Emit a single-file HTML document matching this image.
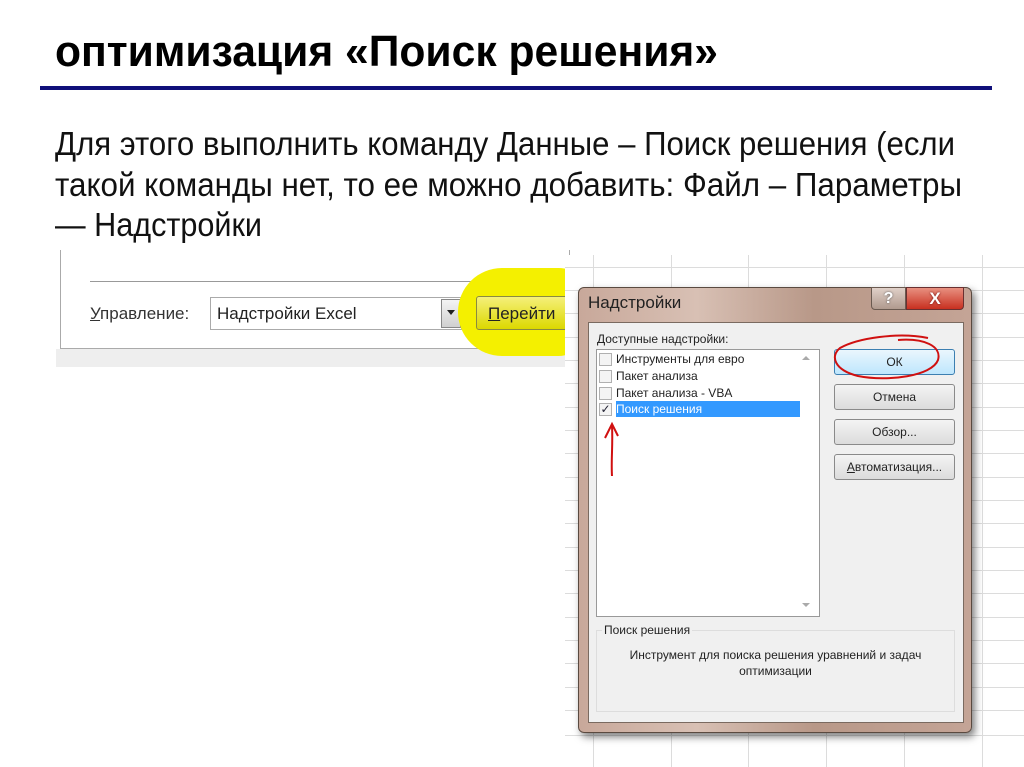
<!DOCTYPE html>
<html><head><meta charset="utf-8"><style>
*{margin:0;padding:0;box-sizing:border-box}
body{width:1024px;height:767px;background:#fff;position:relative;overflow:hidden;font-family:"Liberation Sans","DejaVu Sans",sans-serif}
.a{position:absolute}
.btn{position:absolute;left:834px;width:121px;height:26px;border:1px solid #8a8a8a;border-radius:3px;background:linear-gradient(#f4f4f4,#dcdcdc);font-size:12px;text-align:center;line-height:24px;color:#222}
.it{position:absolute;left:600px;font-size:12px;color:#222;height:16px;line-height:16px}
.cb{display:inline-block;width:13px;height:13px;border:1px solid #b0b0b0;background:#f4f4f4;vertical-align:middle;margin-right:4px}
</style></head><body>
<svg class="a" style="left:0;top:0" width="1024" height="250">
<text x="55" y="66" font-family="Liberation Sans" font-weight="bold" font-size="44" textLength="663" lengthAdjust="spacingAndGlyphs">оптимизация «Поиск решения»</text>
<rect x="40" y="86" width="952" height="4" fill="#10107a"/>
<text x="55" y="155" font-family="Liberation Sans" font-size="33" fill="#111" textLength="900" lengthAdjust="spacingAndGlyphs">Для этого выполнить команду Данные – Поиск решения (если</text>
<text x="55" y="196" font-family="Liberation Sans" font-size="33" fill="#111" textLength="907" lengthAdjust="spacingAndGlyphs">такой команды нет, то ее можно добавить: Файл – Параметры</text>
<text x="55" y="236" font-family="Liberation Sans" font-size="33" fill="#111" textLength="207" lengthAdjust="spacingAndGlyphs">— Надстройки</text>
</svg>
<!-- left panel -->
<div class="a" style="left:60px;top:250px;width:510px;height:99px;border:1px solid #aaa;border-top:none;background:#fff"></div>
<div class="a" style="left:56px;top:349px;width:514px;height:18px;background:#eeeeee"></div>
<div class="a" style="left:90px;top:281px;width:480px;height:1px;background:#999"></div>
<div class="a" style="left:90px;top:304px;font-size:17px;color:#333"><u>У</u>правление:</div>
<div class="a" style="left:210px;top:297px;width:252px;height:33px;border:1px solid #aaa;background:#fff"></div>
<div class="a" style="left:217px;top:304px;font-size:17px;color:#222">Надстройки Excel</div>
<div class="a" style="left:441px;top:299px;width:20px;height:29px;border:1px solid #888;background:linear-gradient(#f4f4f4,#d0d0d0)"></div>
<div class="a" style="left:447px;top:310px;border-left:4px solid transparent;border-right:4px solid transparent;border-top:5px solid #222"></div>
<div class="a" style="left:458px;top:268px;width:130px;height:88px;border-radius:45px 30px 30px 45px;background:#f4f000"></div>
<div class="a" style="left:476px;top:296px;width:100px;height:34px;border:1px solid #8a8a40;border-radius:3px;background:linear-gradient(#f5f07a,#dcd800)"></div>
<div class="a" style="left:488px;top:304px;font-size:17px;color:#222"><u>П</u>ерейти</div>
<!-- grid -->
<svg class="a" style="left:565px;top:255px" width="459" height="512">
<rect x="0" y="0" width="459" height="512" fill="#fff"/>
<g stroke="#dcdcdc" stroke-width="1">
<line x1="28.5" y1="0" x2="28.5" y2="512"/><line x1="106.5" y1="0" x2="106.5" y2="512"/><line x1="183.5" y1="0" x2="183.5" y2="512"/><line x1="261.5" y1="0" x2="261.5" y2="512"/><line x1="339.5" y1="0" x2="339.5" y2="512"/><line x1="417.5" y1="0" x2="417.5" y2="512"/>
<line x1="0" y1="12.5" x2="459" y2="12.5"/><line x1="0" y1="35.5" x2="459" y2="35.5"/><line x1="0" y1="58.5" x2="459" y2="58.5"/><line x1="0" y1="82.5" x2="459" y2="82.5"/><line x1="0" y1="105.5" x2="459" y2="105.5"/><line x1="0" y1="128.5" x2="459" y2="128.5"/><line x1="0" y1="152.5" x2="459" y2="152.5"/><line x1="0" y1="175.5" x2="459" y2="175.5"/><line x1="0" y1="198.5" x2="459" y2="198.5"/><line x1="0" y1="222.5" x2="459" y2="222.5"/><line x1="0" y1="245.5" x2="459" y2="245.5"/><line x1="0" y1="268.5" x2="459" y2="268.5"/><line x1="0" y1="292.5" x2="459" y2="292.5"/><line x1="0" y1="315.5" x2="459" y2="315.5"/><line x1="0" y1="338.5" x2="459" y2="338.5"/><line x1="0" y1="362.5" x2="459" y2="362.5"/><line x1="0" y1="385.5" x2="459" y2="385.5"/><line x1="0" y1="408.5" x2="459" y2="408.5"/><line x1="0" y1="432.5" x2="459" y2="432.5"/><line x1="0" y1="455.5" x2="459" y2="455.5"/><line x1="0" y1="480.5" x2="459" y2="480.5"/>
</g></svg>
<!-- dialog -->
<div class="a" style="left:578px;top:287px;width:394px;height:446px;border:1px solid #5a4a40;border-radius:6px;background:linear-gradient(90deg,#c8a89a,#d8c0b4 30%,#b89888 60%,#c4a496);box-shadow:3px 4px 8px rgba(0,0,0,.5)"></div>
<div class="a" style="left:588px;top:322px;width:376px;height:401px;border:1px solid #7a6a60;background:#f0f0f0"></div>
<div class="a" style="left:588px;top:293px;font-size:17px;color:#222">Надстройки</div>
<div class="a" style="left:871px;top:287px;width:35px;height:23px;border:1px solid #6a5a50;border-radius:0 0 0 4px;background:linear-gradient(#e0d0c8,#b09a8e);color:#fff;font-weight:bold;font-size:16px;text-align:center;line-height:21px;text-shadow:0 0 2px #555">?</div>
<div class="a" style="left:906px;top:287px;width:58px;height:23px;border:1px solid #6a3030;border-radius:0 0 4px 0;background:linear-gradient(#e89080,#c83020);color:#fff;font-weight:bold;font-size:17px;text-align:center;line-height:21px;text-shadow:0 0 2px #600">X</div>
<div class="a" style="left:597px;top:332px;font-size:12px;color:#222">Доступные надстройки:</div>
<div class="a" style="left:596px;top:349px;width:224px;height:268px;border:1px solid #999;background:#fff"></div>
<div class="a" style="left:802px;top:356px;border-left:4px solid transparent;border-right:4px solid transparent;border-bottom:4px solid #aaa"></div>
<div class="a" style="left:802px;top:603px;border-left:4px solid transparent;border-right:4px solid transparent;border-top:4px solid #aaa"></div>
<div class="a" style="left:616px;top:401px;width:184px;height:16px;background:#3399ff"></div>
<div class="it" style="top:351px;left:599px"><span class="cb"></span>Инструменты для евро</div>
<div class="it" style="top:368px;left:599px"><span class="cb"></span>Пакет анализа</div>
<div class="it" style="top:385px;left:599px"><span class="cb"></span>Пакет анализа - VBA</div>
<div class="it" style="top:401px;left:599px"><span class="cb" style="font-size:12px;line-height:11px;text-align:center;color:#223">✓</span><span style="color:#fff">Поиск решения</span></div>
<svg class="a" style="left:600px;top:420px" width="24" height="60"><path d="M12 56 C11 40 13 25 12 6 M5 18 L12 4 L18 16" stroke="#d01010" stroke-width="2" fill="none"/></svg>
<div class="btn" style="top:349px;border-color:#3c7fb1;background:linear-gradient(#eaf6fd,#bee6fd)">ОК</div>
<svg class="a" style="left:828px;top:332px" width="116" height="50"><path d="M100 6 C70 0 30 6 12 16 C2 24 6 38 30 44 C60 50 104 44 110 28 C114 14 96 6 70 8" stroke="#d01010" stroke-width="2" fill="none"/></svg>
<div class="btn" style="top:384px">Отмена</div>
<div class="btn" style="top:419px">Обзор...</div>
<div class="btn" style="top:454px"><u>А</u>втоматизация...</div>
<div class="a" style="left:596px;top:630px;width:359px;height:82px;border:1px solid #ddd"></div>
<div class="a" style="left:602px;top:623px;font-size:12px;color:#222;background:#f0f0f0;padding:0 2px">Поиск решения</div>
<div class="a" style="left:596px;top:647px;width:359px;font-size:12px;color:#222;text-align:center;line-height:16px">Инструмент для поиска решения уравнений и задач<br>оптимизации</div>
</body></html>
